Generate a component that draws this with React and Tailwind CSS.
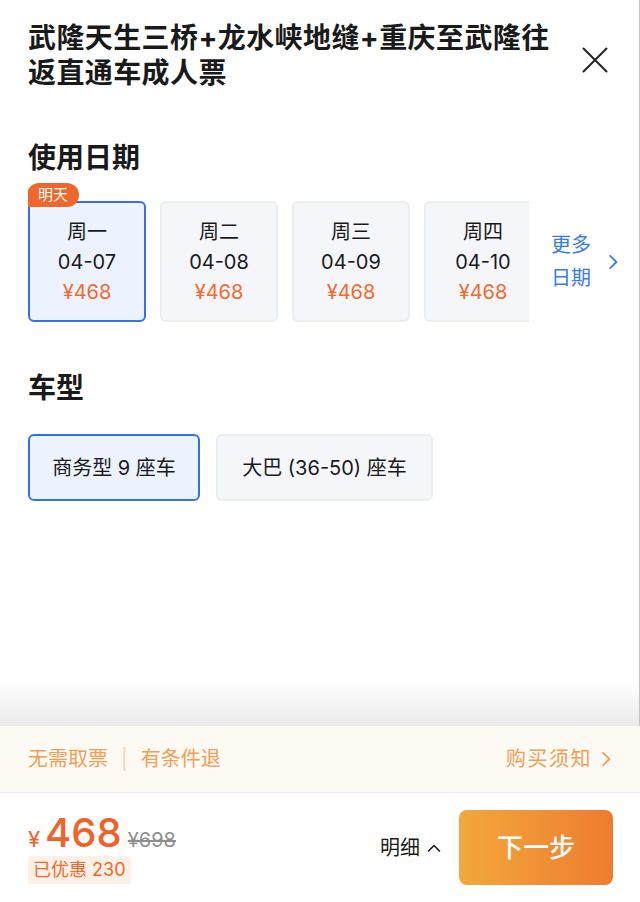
import React, { useState } from 'react';

const dates = [
  { week: '周一', day: '04-07', price: 468, tag: '明天' },
  { week: '周二', day: '04-08', price: 468 },
  { week: '周三', day: '04-09', price: 468 },
  { week: '周四', day: '04-10', price: 468 },
];

const carTypes = [
  { name: '商务型 9 座车', w: 'w-[172px]' },
  { name: '大巴 (36-50) 座车', w: 'w-[217px]' },
];

const Chevron = ({ className, dir = 'right' }) => (
  <svg className={className} viewBox="0 0 16 16" fill="none" stroke="currentColor" strokeWidth="1.6" strokeLinecap="round" strokeLinejoin="round">
    {dir === 'right' ? <path d="M5.5 2.5 L11 8 L5.5 13.5" /> : <path d="M2.5 11 L8 5.5 L13.5 11" />}
  </svg>
);

const App = () => {
  const [dateIdx, setDateIdx] = useState(0);
  const [carIdx, setCarIdx] = useState(0);

  return (
    <div className="w-[640px] h-[902px] flex flex-col bg-white text-[#1a1a1a] font-['Inter','Noto_Sans_CJK_SC',sans-serif]">
      <div className="flex-1 flex flex-col border-r border-[#c4c4c4]">
        <div className="flex justify-between pl-[28px] pt-[21px]">
          <h1 className="w-[540px] text-[28px] leading-[35px] font-bold tracking-[0.4px]">
            武隆天生三桥+龙水峡地缝+重庆至武隆往返直通车成人票
          </h1>
          <button className="mr-[31px] mt-[26px] w-[26px] h-[26px] text-[#222]">
            <svg viewBox="0 0 26 26" className="w-[26px] h-[26px]" stroke="currentColor" strokeWidth="2" strokeLinecap="round">
              <path d="M1.5 1.5 L24.5 24.5 M24.5 1.5 L1.5 24.5" />
            </svg>
          </button>
        </div>

        <h2 className="mt-[47px] pl-[28px] text-[28px] leading-[40px] font-bold">使用日期</h2>
        <div className="mt-[5px] flex items-start">
          <div className="ml-[28px] w-[501px] overflow-hidden pt-[18px]">
            <div className="flex gap-[14px]">
              {dates.map((d, i) => {
                const active = i === dateIdx;
                return (
                  <div
                    key={d.day}
                    onClick={() => setDateIdx(i)}
                    className={`relative shrink-0 w-[118px] h-[121px] rounded-[6px] border-2 pt-[14px] flex flex-col items-center text-[20px] leading-[30px] ${active ? 'bg-[#ecf2fe] border-[#3271e9]' : 'bg-[#f5f6fa] border-[#eaedf2]'}`}
                  >
                    {d.tag && (
                      <span className="absolute left-[-3px] top-[-20px] h-[24px] px-[11px] rounded-t-[12px] rounded-br-[12px] bg-[#ef672a] text-white text-[15px] leading-[24px]">
                        {d.tag}
                      </span>
                    )}
                    <span>{d.week}</span>
                    <span>{d.day}</span>
                    <span className="text-[#f06a2e]">¥{d.price}</span>
                  </div>
                );
              })}
            </div>
          </div>
          <div className="flex items-center mt-[46px] ml-[22px] text-[#3a7bea]">
            <div className="w-[44px] text-[20px] leading-[33px]">更多日期</div>
            <Chevron className="ml-[9px] w-[18px] h-[18px]" />
          </div>
        </div>

        <h2 className="mt-[46px] pl-[28px] text-[28px] leading-[40px] font-bold">车型</h2>
        <div className="mt-[26px] pl-[28px] flex gap-[16px]">
          {carTypes.map((c, i) => {
            const active = i === carIdx;
            return (
              <button
                key={c.name}
                onClick={() => setCarIdx(i)}
                className={`${c.w} h-[67px] rounded-[6px] border-2 text-[20px] flex items-center justify-center ${active ? 'bg-[#ecf2fe] border-[#3271e9]' : 'bg-[#f5f6fa] border-[#eaedf2]'}`}
              >
                {c.name}
              </button>
            );
          })}
        </div>

        <div className="flex-1" />
        <div className="h-[45px] bg-gradient-to-b from-white to-[#ebebeb]" />
      </div>

      <div className="h-[67px] flex items-center justify-between pl-[28px] pr-[25px] bg-[#fdf9f3] text-[#f0a056] text-[20px] border-b border-[#ececec]">
        <div className="flex items-center">
          <span>无需取票</span>
          <span className="mx-[13px] text-[#f6d3b0]">|</span>
          <span>有条件退</span>
        </div>
        <div className="flex items-center">
          <span className="tracking-[1.5px]">购买须知</span>
          <Chevron className="ml-[5px] w-[18px] h-[18px]" />
        </div>
      </div>

      <div className="flex-none h-[109px] flex items-center justify-between pl-[28px] pr-[27px]">
        <div className="flex flex-col items-start">
          <div className="flex items-baseline text-[#f0622a] h-[42px]">
            <span className="text-[22px] mr-[5px]">¥</span>
            <span className="text-[40px] leading-[42px] font-medium">468</span>
            <span className="ml-[6px] text-[20px] text-[#8e8e8e] line-through">¥698</span>
          </div>
          <span className="mt-[2px] px-[5px] rounded-[3px] bg-[#fdf0e6] text-[#ef6a2e] text-[18px] leading-[28px]">已优惠 230</span>
        </div>
        <div className="flex items-center">
          <span className="text-[20px]">明细</span>
          <Chevron dir="up" className="ml-[6px] w-[16px] h-[16px]" />
          <button className="ml-[17px] w-[154px] h-[75px] rounded-[8px] bg-gradient-to-r from-[#f2a83c] to-[#ee7b2f] text-white text-[26px] font-medium">
            下一步
          </button>
        </div>
      </div>
    </div>
  );
};

export default App;
